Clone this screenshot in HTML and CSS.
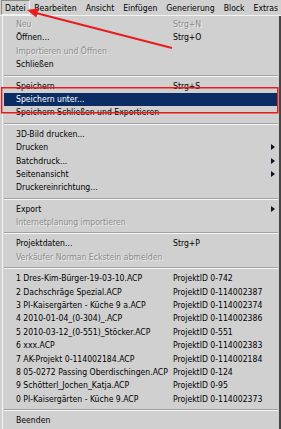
FILE: index.html
```html
<!doctype html>
<html lang="de">
<head>
	<meta charset="utf-8" />
	<title>Datei-Menü</title>
	<link rel="stylesheet" href="styles.css">
</head>
<body>

	<!-- BEGIN: Menubar. -->
	<nav class="menubar">
		<span class="menubar__item menubar__item--open">Datei</span>
		<span class="menubar__item">Bearbeiten</span>
		<span class="menubar__item">Ansicht</span>
		<span class="menubar__item">Einfügen</span>
		<span class="menubar__item">Generierung</span>
		<span class="menubar__item">Block</span>
		<span class="menubar__item">Extras</span>
	</nav>
	<!-- END: Menubar. -->

	<!-- BEGIN: Datei menu. -->
	<ul class="menu">
		<li class="menu__item menu__item--disabled"><span>Neu</span><span>Strg+N</span></li>
		<li class="menu__item"><span>Öffnen...</span><span>Strg+O</span></li>
		<li class="menu__item menu__item--disabled"><span>Importieren und Öffnen</span></li>
		<li class="menu__item"><span>Schließen</span></li>
		<li class="menu__separator"></li>
		<li class="menu__item"><span>Speichern</span><span>Strg+S</span></li>
		<li class="menu__item menu__item--active"><span>Speichern unter...</span></li>
		<li class="menu__item"><span>Speichern Schließen und Exportieren</span></li>
		<li class="menu__separator"></li>
		<li class="menu__item"><span>3D-Bild drucken...</span></li>
		<li class="menu__item menu__item--sub"><span>Drucken</span></li>
		<li class="menu__item menu__item--sub"><span>Batchdruck...</span></li>
		<li class="menu__item menu__item--sub"><span>Seitenansicht</span></li>
		<li class="menu__item"><span>Druckereinrichtung...</span></li>
		<li class="menu__separator"></li>
		<li class="menu__item menu__item--sub"><span>Export</span></li>
		<li class="menu__item menu__item--disabled"><span>Internetplanung importieren</span></li>
		<li class="menu__separator"></li>
		<li class="menu__item"><span>Projektdaten...</span><span>Strg+P</span></li>
		<li class="menu__item menu__item--disabled"><span>Verkäufer Norman Eckstein abmelden</span></li>
		<li class="menu__separator"></li>
		<li class="menu__item"><span>1 Dres-Kim-Bürger-19-03-10.ACP</span><span>ProjektID 0-742</span></li>
		<li class="menu__item"><span>2 Dachschräge Spezial.ACP</span><span>ProjektID 0-114002387</span></li>
		<li class="menu__item"><span>3 PI-Kaisergärten - Küche 9 a.ACP</span><span>ProjektID 0-114002374</span></li>
		<li class="menu__item"><span>4 2010-01-04_(0-304)_.ACP</span><span>ProjektID 0-114002386</span></li>
		<li class="menu__item"><span>5 2010-03-12_(0-551)_Stöcker.ACP</span><span>ProjektID 0-551</span></li>
		<li class="menu__item"><span>6 xxx.ACP</span><span>ProjektID 0-114002383</span></li>
		<li class="menu__item"><span>7 AK-Projekt 0-114002184.ACP</span><span>ProjektID 0-114002184</span></li>
		<li class="menu__item"><span>8 05-0272 Passing Oberdischingen.ACP</span><span>ProjektID 0-124</span></li>
		<li class="menu__item"><span>9 Schötterl_Jochen_Katja.ACP</span><span>ProjektID 0-95</span></li>
		<li class="menu__item"><span>0 PI-Kaisergärten - Küche 9.ACP</span><span>ProjektID 0-114002373</span></li>
		<li class="menu__separator"></li>
		<li class="menu__item"><span>Beenden</span></li>
	</ul>
	<!-- END: Datei menu. -->

	<!-- Red annotation drawn over the screenshot. -->
	<svg class="markup" width="281" height="429" viewBox="0 0 281 429">
		<line x1="172" y1="48" x2="34" y2="12.5" stroke="#e81c1c" stroke-width="2" />
		<polygon points="27,10 38.7,8.2 36.3,17.4" fill="#e81c1c" />
		<rect x="1.75" y="87.75" width="276" height="25" fill="none" stroke="#e81c1c" stroke-width="1.5" />
	</svg>

</body>
</html>
```

FILE: styles.css
```css
html {
	box-sizing: border-box ;
}

*, *:before, *:after {
	box-sizing: inherit ;
}

body {
	background-color: #d0d0d0 ;
	color: #000000 ;
	font-family: "DejaVu Sans Condensed", "DejaVu Sans", sans-serif ;
	font-size: 8.6px ;
	height: 429px ;
	margin: 0px 0px 0px 0px ;
	overflow: hidden ;
	position: relative ;
	width: 281px ;
}

/* BEGIN: Menubar. */
.menubar {
	border-bottom: 1px solid #f2f2f2 ;
	display: flex ;
	height: 16px ;
	padding: 0px 0px 0px 1px ;
}

.menubar__item {
	border: 1px solid transparent ;
	line-height: 14px ;
	padding: 0px 3.5px 0px 3.5px ;
	white-space: nowrap ;
}

.menubar__item--open {
	border-color: #8a8a8a #f4f4f4 #f4f4f4 #8a8a8a ;
	padding: 0px 3px 0px 3px ;
}
/* END: Menubar. */

/* BEGIN: Menu. */
.menu {
	border-left: 1px solid #f4f4f4 ;
	border-right: 2px solid #454545 ;
	height: 413px ;
	list-style: none ;
	margin: 0px 0px 0px 2px ;
	padding: 2px 1px 0px 1px ;
}

.menu__item {
	display: grid ;
	grid-template-columns: 157px 1fr ;
	height: 13.4px ;
	line-height: 13.4px ;
	padding: 0px 3px 0px 12px ;
	position: relative ;
	white-space: nowrap ;
}

.menu__item--disabled {
	color: #8c8c8c ;
	text-shadow: 1px 1px 0px #ececec ;
}

.menu__item--active {
	background-color: #0b2d64 ;
	color: #ffffff ;
}

.menu__item--sub:after {
	border-bottom: 3.5px solid transparent ;
	border-left: 4px solid #10122a ;
	border-top: 3.5px solid transparent ;
	content: "" ;
	position: absolute ;
	right: 3px ;
	top: 3px ;
}

.menu__separator {
	border-bottom: 1px solid #f6f6f6 ;
	border-top: 1px solid #a2a2a2 ;
	margin: 3px 0px 3px 0px ;
}
/* END: Menu. */

.markup {
	left: 0px ;
	pointer-events: none ;
	position: absolute ;
	top: 0px ;
}
```
